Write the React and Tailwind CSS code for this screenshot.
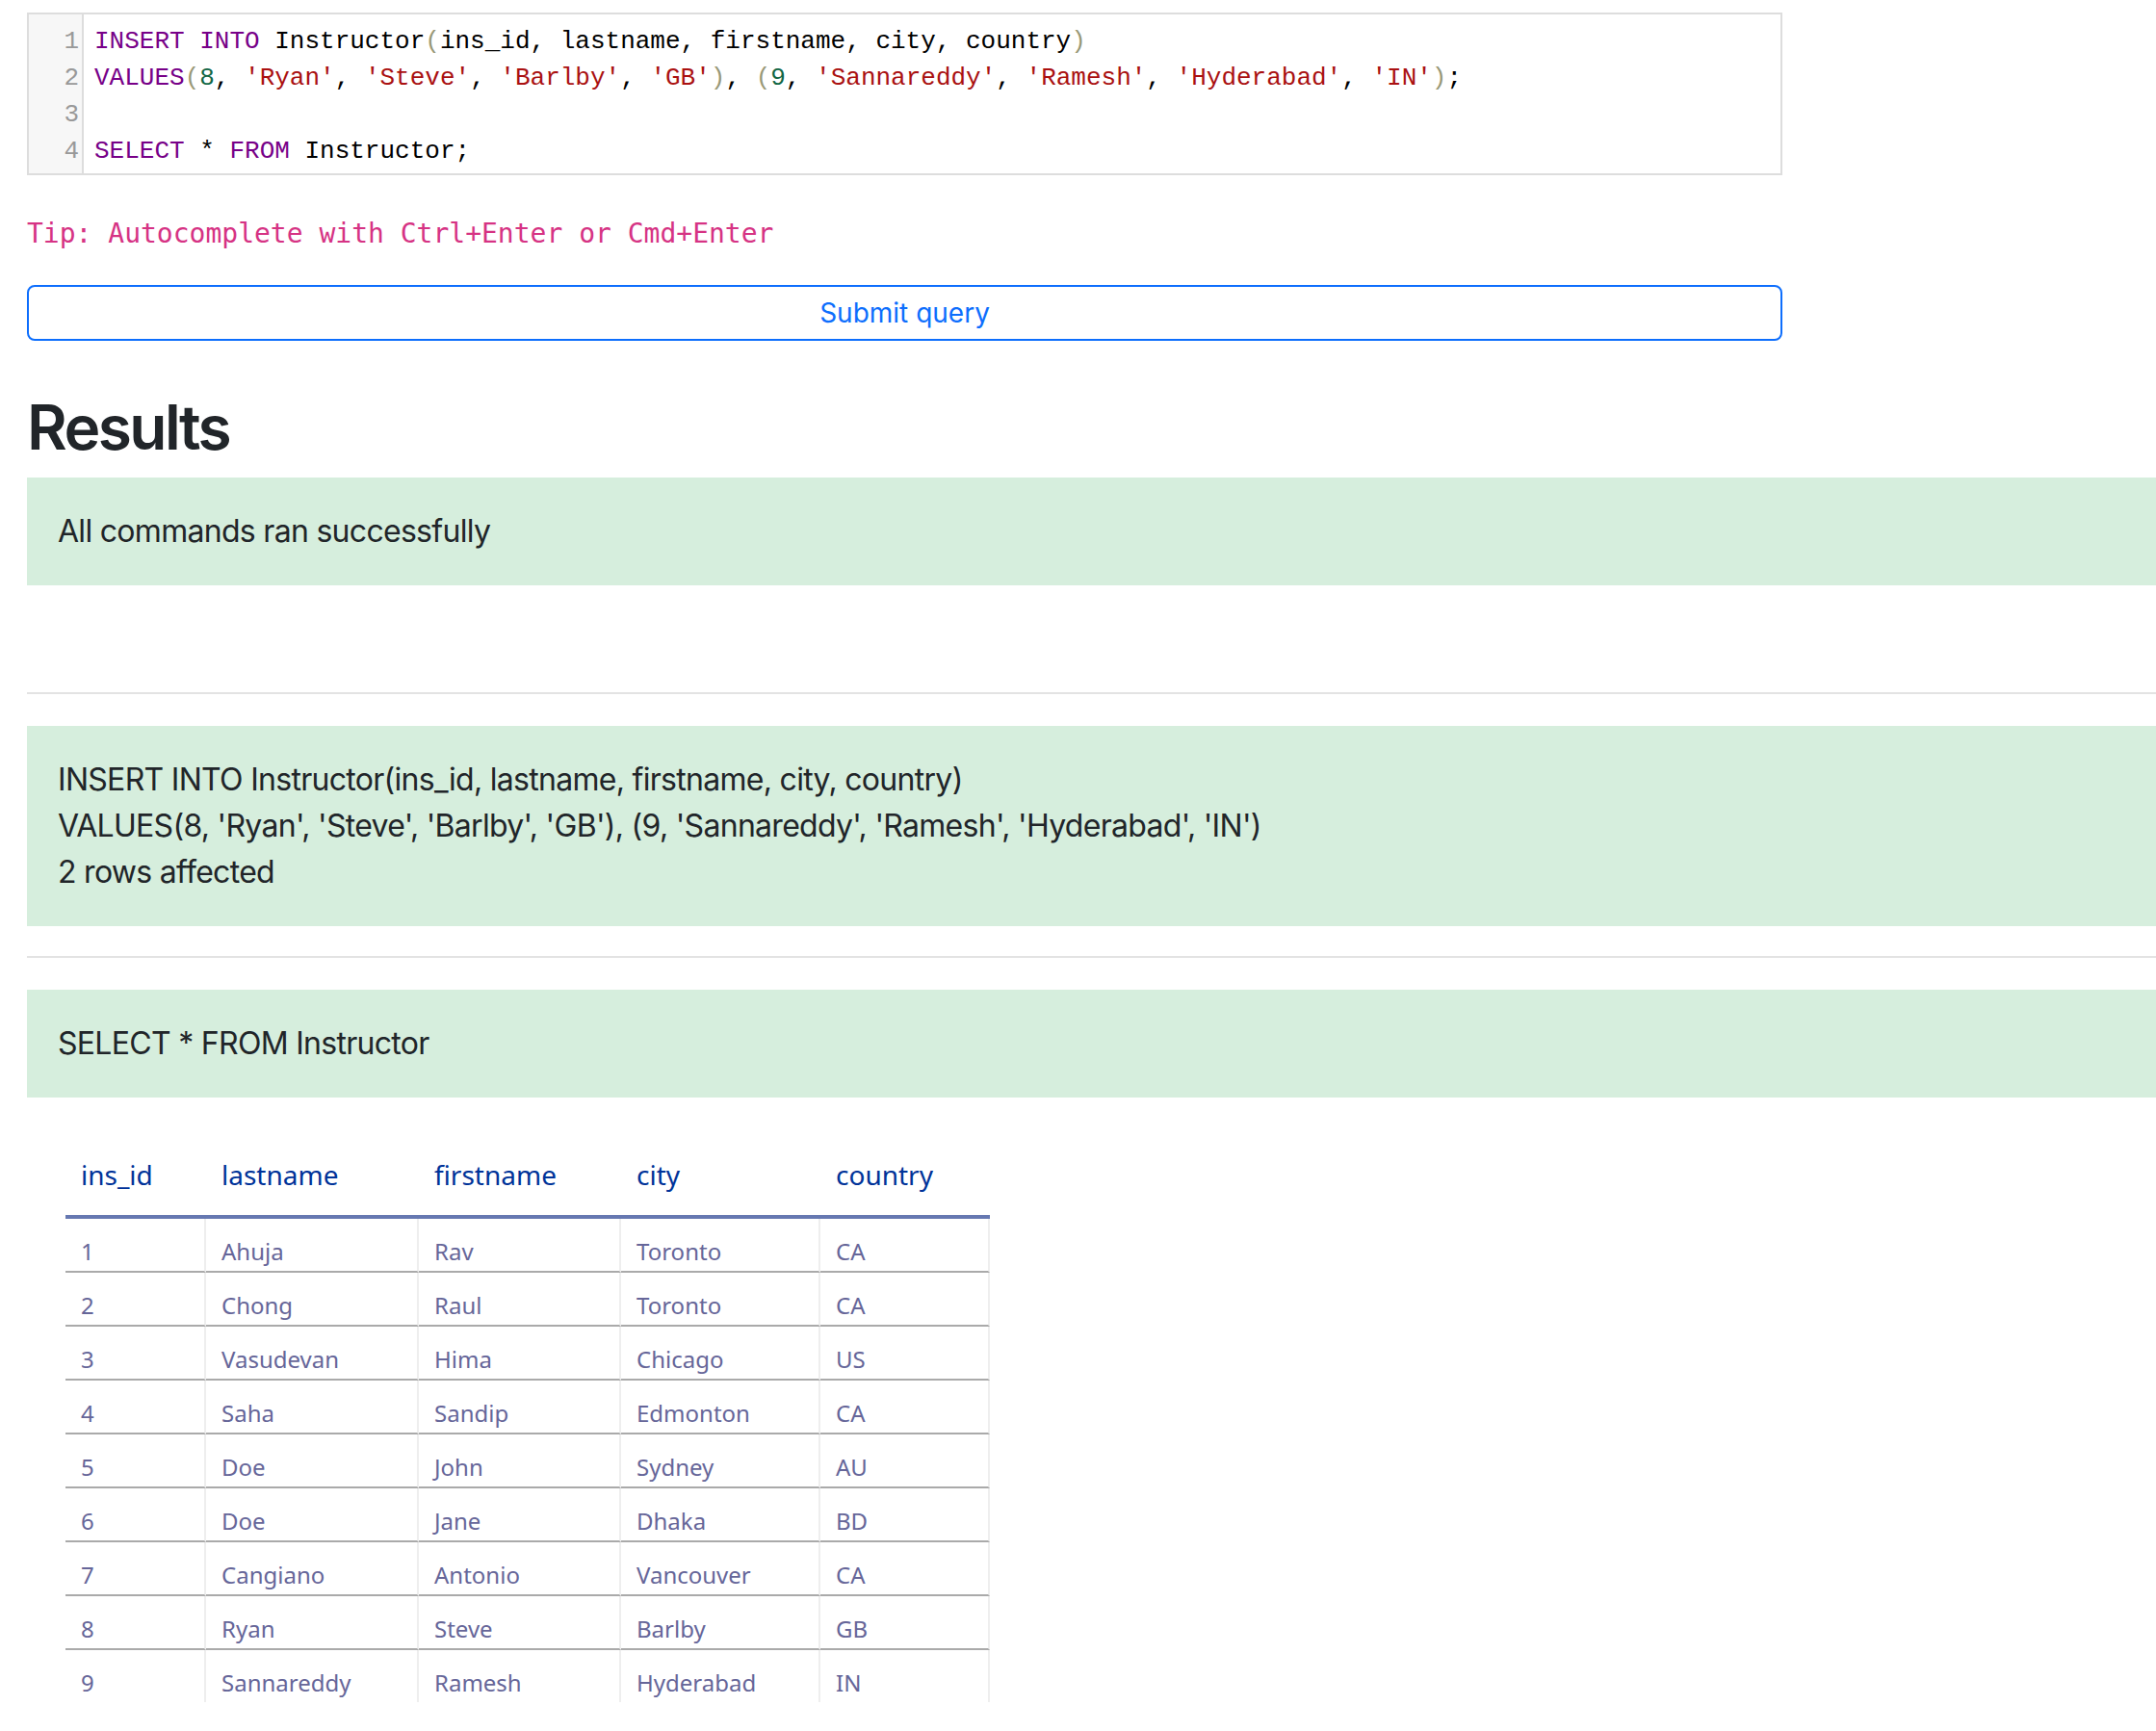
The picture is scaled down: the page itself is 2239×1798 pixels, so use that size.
import React from 'react';

const KW = 'text-[#770088]';
const STR = 'text-[#aa1111]';
const NUM = 'text-[#116644]';
const BR = 'text-[#999977]';

const codeLines = [
    [
        [KW, 'INSERT'], ['', ' '], [KW, 'INTO'], ['', ' Instructor'], [BR, '('],
        ['', 'ins_id, lastname, firstname, city, country'], [BR, ')'],
    ],
    [
        [KW, 'VALUES'], [BR, '('], [NUM, '8'], ['', ', '], [STR, "'Ryan'"], ['', ', '],
        [STR, "'Steve'"], ['', ', '], [STR, "'Barlby'"], ['', ', '], [STR, "'GB'"], [BR, ')'],
        ['', ', '], [BR, '('], [NUM, '9'], ['', ', '], [STR, "'Sannareddy'"], ['', ', '],
        [STR, "'Ramesh'"], ['', ', '], [STR, "'Hyderabad'"], ['', ', '], [STR, "'IN'"], [BR, ')'], ['', ';'],
    ],
    [],
    [
        [KW, 'SELECT'], ['', ' * '], [KW, 'FROM'], ['', ' Instructor;'],
    ],
];

const columns = ['ins_id', 'lastname', 'firstname', 'city', 'country'];
const colWidths = ['146px', '221px', '210px', '207px', '176px'];

const rows = [
    [1, 'Ahuja', 'Rav', 'Toronto', 'CA'],
    [2, 'Chong', 'Raul', 'Toronto', 'CA'],
    [3, 'Vasudevan', 'Hima', 'Chicago', 'US'],
    [4, 'Saha', 'Sandip', 'Edmonton', 'CA'],
    [5, 'Doe', 'John', 'Sydney', 'AU'],
    [6, 'Doe', 'Jane', 'Dhaka', 'BD'],
    [7, 'Cangiano', 'Antonio', 'Vancouver', 'CA'],
    [8, 'Ryan', 'Steve', 'Barlby', 'GB'],
    [9, 'Sannareddy', 'Ramesh', 'Hyderabad', 'IN'],
];

const Editor = () => (
    <div className="w-[1823px] border-2 border-[#dddddd] bg-white flex font-['Liberation_Mono',monospace] text-[26px] leading-[38px]">
        <div className="w-[57px] shrink-0 bg-[#f7f7f7] border-r-2 border-[#dddddd] pt-[9px] pb-[4px] pr-[3px] text-right text-[#999999]">
            {codeLines.map((_, i) => (
                <div key={i}>{i + 1}</div>
            ))}
        </div>
        <div className="pl-[11px] pt-[9px] pb-[4px] text-black whitespace-pre">
            {codeLines.map((line, i) => (
                <div key={i} className="h-[38px]">
                    {line.map(([cls, text], j) => (
                        <span key={j} className={cls}>{text}</span>
                    ))}
                </div>
            ))}
        </div>
    </div>
);

const Alert = ({ children }) => (
    <div className="bg-[#d6eedd] px-[32px] py-[32px] text-[32px] leading-[48px] tracking-[-0.022em] text-[#212529]">
        {children}
    </div>
);

const Separator = () => <div className="h-[2px] bg-[#e3e3e3]" />;

const ResultTable = () => (
    <table className="ml-[40px] mt-[40px] w-[960px] table-fixed border-separate border-spacing-0 font-['Noto_Sans',sans-serif] text-left">
        <colgroup>
            {colWidths.map((w, i) => (
                <col key={i} style={{ width: w }} />
            ))}
        </colgroup>
        <thead>
            <tr>
                {columns.map(col => (
                    <th key={col} className="font-normal text-[28px] leading-[42px] text-[#003399] pt-[19px] pb-[21px] px-[16px] border-b-4 border-[#6678b1]">
                        {col}
                    </th>
                ))}
            </tr>
        </thead>
        <tbody>
            {rows.map((row, r) => (
                <tr key={r}>
                    {row.map((cell, c) => (
                        <td
                            key={c}
                            className={`text-[24px] leading-[36px] text-[#666699] pt-[16px] pb-[2px] px-[16px] border-r-2 border-r-[#eeeeee] ${r < rows.length - 1 ? 'border-b-2 border-b-[#aaaaaa]' : ''}`}
                        >
                            {cell}
                        </td>
                    ))}
                </tr>
            ))}
        </tbody>
    </table>
);

const App = () => {
    return (
        <div className="min-h-screen bg-white overflow-hidden pl-[28px] pt-[13px] pb-[40px] font-['Inter',sans-serif]">
            <Editor />

            <p className="mt-[40px] font-['DejaVu_Sans_Mono',monospace] text-[28px] leading-[42px] text-[#d63384]">
                Tip: Autocomplete with Ctrl+Enter or Cmd+Enter
            </p>

            <button className="mt-[32px] w-[1823px] h-[58px] flex items-center justify-center border-2 border-[#0d6efd] rounded-[8px] bg-white text-[#0d6efd] text-[28px]">
                Submit query
            </button>

            <h2 className="mt-[51px] text-[64px] leading-[77px] font-semibold tracking-[-0.04em] text-[#212529]">
                Results
            </h2>

            <div className="mt-[14px]">
                <Alert>All commands ran successfully</Alert>
            </div>

            <div className="mt-[111px]">
                <Separator />
            </div>

            <div className="mt-[33px]">
                <Alert>
                    <div>INSERT INTO Instructor(ins_id, lastname, firstname, city, country)</div>
                    <div>VALUES(8, 'Ryan', 'Steve', 'Barlby', 'GB'), (9, 'Sannareddy', 'Ramesh', 'Hyderabad', 'IN')</div>
                    <div>2 rows affected</div>
                </Alert>
            </div>

            <div className="mt-[31px]">
                <Separator />
            </div>

            <div className="mt-[33px]">
                <Alert>SELECT * FROM Instructor</Alert>
            </div>

            <ResultTable />
        </div>
    );
};

export default App;
